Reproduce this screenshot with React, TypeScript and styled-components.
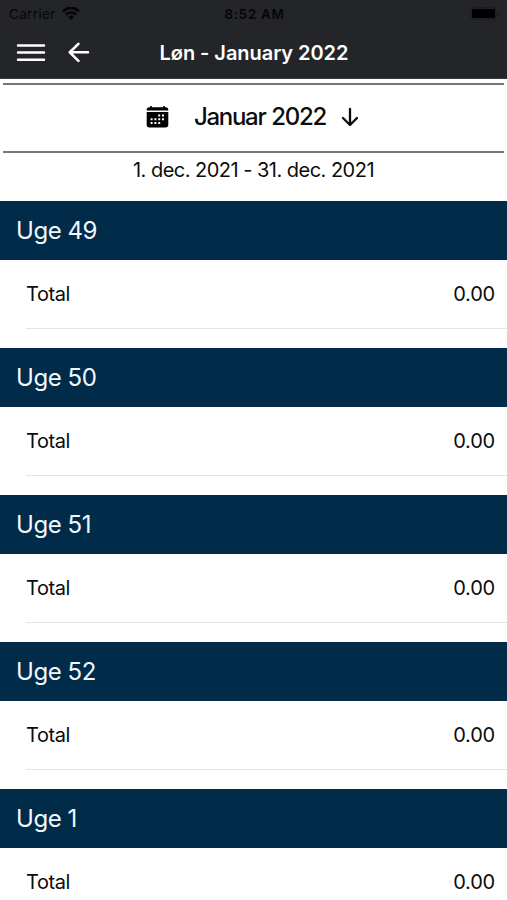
import React from 'react';
import styled, { createGlobalStyle } from 'styled-components';

const GlobalStyle = createGlobalStyle`
  * { box-sizing: border-box; }
  html, body { margin: 0; background: #fff; }
  body { font-family: Inter, "Liberation Sans", sans-serif; color: #0c0c0c; overflow: hidden; }
`;

const Screen = styled.main`
  width: 507px;
  height: 900px;
  overflow: hidden;
  background: #fff;
`;

const TopBar = styled.header`
  height: 79px;
  background: #242529;
  border-bottom: 1px solid #38393c;
`;

const StatusBar = styled.div`
  display: grid;
  grid-template-columns: 1fr auto 1fr;
  align-items: center;
  height: 27px;
  padding: 0 7px 0 9px;
  color: #050506;
  font-size: 13.3px;
`;

const Carrier = styled.div`
  display: flex;
  align-items: center;
  gap: 6px;
  letter-spacing: 0.45px;
`;

const Clock = styled.div`
  font-size: 13.3px;
  font-weight: 600;
  letter-spacing: 0.75px;
`;

const Battery = styled.svg`
  justify-self: end;
  display: block;
`;

const NavBar = styled.nav`
  display: grid;
  grid-template-columns: 1fr auto 1fr;
  align-items: center;
  height: 51px;
  color: #fff;
`;

const NavActions = styled.div`
  display: flex;
  align-items: center;
  gap: 22px;
  padding-left: 16px;
`;

const NavTitle = styled.h1`
  margin: 0;
  padding-left: 1px;
  font-size: 20px;
  font-weight: 600;
  letter-spacing: -0.05px;
`;

const IconButton = styled.button`
  display: flex;
  padding: 0;
  border: 0;
  background: none;
  color: inherit;
`;

const PeriodPicker = styled.section`
  display: flex;
  align-items: center;
  height: 70px;
  margin: 4px 3px 0;
  padding: 0 0 3px 143px;
  border-top: 2px solid #777;
  border-bottom: 2px solid #777;
`;

const PeriodName = styled.span`
  margin: 0 15px 0 25px;
  font-size: 24px;
  font-weight: 500;
  letter-spacing: -1.3px;
  word-spacing: 0.8px;
  white-space: nowrap;
`;

const DateRange = styled.p`
  height: 48px;
  margin: 0;
  padding-top: 5px;
  font-size: 20px;
  line-height: 25px;
  letter-spacing: -0.52px;
  text-align: center;
`;

const Week = styled.section`
  height: 147px;
`;

const WeekHeading = styled.h2`
  height: 59px;
  margin: 0;
  padding-left: 16px;
  background: #002b49;
  color: #f2f7fb;
  font-size: 24px;
  font-weight: 400;
  line-height: 59px;
  letter-spacing: -0.45px;
`;

const TotalRow = styled.div`
  display: flex;
  align-items: center;
  justify-content: space-between;
  height: 69px;
  margin-left: 26px;
  padding-right: 12px;
  border-bottom: 1px solid #e4e4e6;
  font-size: 20px;
`;

const Label = styled.span`
  letter-spacing: -0.4px;
`;

const Amount = styled.span`
  letter-spacing: -0.2px;
`;

const weeks = [49, 50, 51, 52, 1].map((number) => ({ number, total: '0.00' }));

const WifiIcon = () => (
  <svg width="18" height="14" viewBox="0 0 18 14" fill="none" stroke="currentColor" strokeWidth="2.6">
    <path d="M1 4.2a11.4 11.4 0 0 1 16 0" />
    <path d="M4 7.5a7.2 7.2 0 0 1 10 0" />
    <path d="M9 12.9 6.1 10a4.1 4.1 0 0 1 5.8 0Z" fill="currentColor" stroke="none" />
  </svg>
);

const BatteryIcon = () => (
  <Battery width="30" height="13" viewBox="0 0 30 13">
    <rect x="0.8" y="0.8" width="25.4" height="11.4" rx="3" fill="none" stroke="#1a1b1d" strokeWidth="1" />
    <rect x="2" y="2" width="23" height="9" rx="1.6" fill="#000" />
    <path d="M28 4.5v4q1.4-.6 1.4-2t-1.4-2" fill="#1a1b1d" />
  </Battery>
);

const MenuIcon = () => (
  <svg width="30" height="20" viewBox="0 0 30 20" fill="none" stroke="currentColor" strokeWidth="2.5" strokeLinecap="round">
    <path d="M2 2.4h26M2 9.6h26M2 16.8h26" />
  </svg>
);

const BackIcon = () => (
  <svg width="23" height="22" viewBox="0 0 23 22" fill="none" stroke="currentColor" strokeWidth="2.6" strokeLinecap="round" strokeLinejoin="round">
    <path d="M10.4 1.9 1.8 10.3l8.6 8.6M2 10.3H20" />
  </svg>
);

const CalendarIcon = () => (
  <svg width="23" height="22" viewBox="0 0 23 22">
    <path fill="#000" d="M4.2 0h1.6v1.3h11.4V0h1.6v1.3h.7q2.8 0 2.8 2.7v.6H.7V4q0-2.7 2.8-2.7h.7ZM.7 6h21.6v12.8q0 2.7-2.8 2.7h-16q-2.8 0-2.8-2.7Z" />
    <g fill="#fff">
      <path d="M12.2 8.5h2v2h-2ZM16 8.5h2v2h-2Z" />
      <path d="M4.6 12.2h2v2h-2ZM8.4 12.2h2v2h-2ZM12.2 12.2h2v2h-2ZM16 12.2h2v2h-2Z" />
      <path d="M4.6 15.9h2v2h-2ZM8.4 15.9h2v2h-2ZM12.2 15.9h2v2h-2Z" />
    </g>
  </svg>
);

const DownIcon = () => (
  <svg width="18" height="20" viewBox="0 0 18 20" fill="none" stroke="#0a0a0a" strokeWidth="2.3" strokeLinecap="round" strokeLinejoin="round">
    <path d="M9 2v16M2 11l7 7 7-7" />
  </svg>
);

export default function App() {
  return (
    <>
      <GlobalStyle />
      <Screen>
        <TopBar>
          <StatusBar>
            <Carrier>Carrier <WifiIcon /></Carrier>
            <Clock>8:52 AM</Clock>
            <BatteryIcon />
          </StatusBar>
          <NavBar>
            <NavActions>
              <IconButton aria-label="Menu"><MenuIcon /></IconButton>
              <IconButton aria-label="Back"><BackIcon /></IconButton>
            </NavActions>
            <NavTitle>Løn - January 2022</NavTitle>
          </NavBar>
        </TopBar>
        <PeriodPicker>
          <CalendarIcon />
          <PeriodName>Januar 2022</PeriodName>
          <DownIcon />
        </PeriodPicker>
        <DateRange>1. dec. 2021 - 31. dec. 2021</DateRange>
        {weeks.map((week) => (
          <Week key={week.number}>
            <WeekHeading>Uge {week.number}</WeekHeading>
            <TotalRow>
              <Label>Total</Label>
              <Amount>{week.total}</Amount>
            </TotalRow>
          </Week>
        ))}
      </Screen>
    </>
  );
}
